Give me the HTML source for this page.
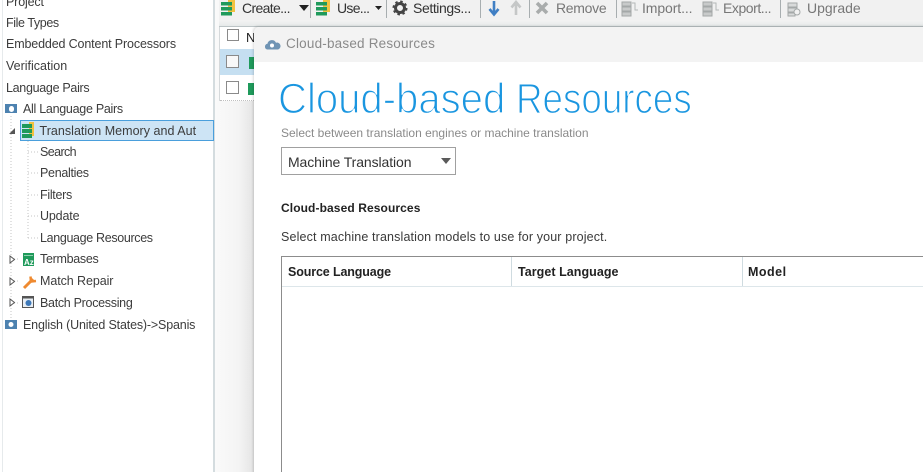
<!DOCTYPE html>
<html><head><meta charset="utf-8">
<style>
html,body{margin:0;padding:0;width:923px;height:472px;overflow:hidden;background:#fff}
body{position:relative;font-family:"Liberation Sans",sans-serif;color:#3c3c3c}
#w{position:absolute;left:0;top:0;width:923px;height:472px;overflow:hidden;filter:blur(.3px)}
.t{position:absolute;white-space:nowrap;font-size:12.5px;line-height:16px}
.b{position:absolute}
svg{position:absolute;overflow:visible}
.k{font-size:14px;top:0;color:#333}
.g{font-size:14px;top:0;color:#777}
.h{font-size:12.5px;font-weight:bold;color:#222}
.ti{top:72px;font-size:43px;line-height:54px;color:#1a96e0;-webkit-text-stroke:1.300px #fff;transform-origin:0 0}
</style></head><body><div id="w">
<!-- left tree -->
<div class="b" style="left:2px;top:0;width:1px;height:472px;background:#e6eaec"></div>
<div class="b" style="left:213px;top:0;width:2px;height:472px;background:#d4dcdf"></div>
<div class="b" style="left:215px;top:0;width:39px;height:472px;background:linear-gradient(90deg,#fafafa,#f4f4f4 60%,#e4e4e4)"></div>
<div class="t" style="left:6px;top:-6px;letter-spacing:-.15px">Project</div>
<div class="t" style="left:6px;top:15px;letter-spacing:-.4px">File Types</div>
<div class="t" style="left:6px;top:36px;letter-spacing:-.14px">Embedded Content Processors</div>
<div class="t" style="left:6px;top:58px">Verification</div>
<div class="t" style="left:6px;top:80px;letter-spacing:-.3px">Language Pairs</div>
<div class="b" style="left:5px;top:104px;width:12px;height:9px;background:#4d82b0"></div>
<div class="b" style="left:9px;top:105.500px;width:5px;height:6px;border-radius:3px;background:#fff"></div>
<div class="t" style="left:23px;top:101px;letter-spacing:-.28px">All Language Pairs</div>
<div class="b" style="left:20px;top:120px;background:#cde4f5;border:1px solid #4a9fdc;box-sizing:border-box;width:194px;height:21px"></div>
<div class="t" style="left:39.500px;top:123px;letter-spacing:.03px">Translation Memory and Aut</div>
<svg style="left:0;top:0" width="100" height="340">
<path d="M11 116V320M28 141V238M28 152H38M28 173H38M28 195H38M28 216H38M28 238H38M14 259H20M14 281H20M14 303H20" stroke="#c4c4c4" stroke-dasharray="1 2" fill="none"/>
<path d="M9 134L15 128V134Z" fill="#555"/>
<path d="M10 256L14.500 259.500L10 263Z M10 278L14.500 281.500L10 285Z M10 299L14.500 302.500L10 306Z" fill="#fff" stroke="#555"/>
<rect x="29" y="122" width="5" height="14" fill="#f2c240"/>
<rect x="22" y="124" width="10" height="4" fill="#1f9a5b"/><rect x="22" y="129" width="10" height="4" fill="#1f9a5b"/><rect x="22" y="134" width="10" height="4" fill="#1f9a5b"/>
<rect x="23" y="253" width="11" height="13" fill="#1f9a5b"/><rect x="24" y="255" width="9" height="1" fill="#8fd0ae"/>
<text x="24" y="265" font-family="Liberation Sans" font-size="8" font-weight="bold" fill="#fff">Az</text>
<path d="M24 288L33 279" stroke="#ef8a30" stroke-width="3" fill="none"/><path d="M30.500 276.500L31 281.500L36 281" stroke="#ef8a30" stroke-width="2.500" fill="none"/>
<rect x="22.500" y="296.500" width="11" height="11" fill="#e8eef4" stroke="#555"/><rect x="22" y="296" width="12" height="2.500" fill="#555"/><circle cx="28.500" cy="303" r="3" fill="#3d78b8"/>
<rect x="5" y="320" width="12" height="9" fill="#4d82b0"/><circle cx="11" cy="324.500" r="2.500" fill="#fff"/>
</svg>
<div class="t" style="left:40px;top:144px;letter-spacing:-.6px">Search</div>
<div class="t" style="left:40px;top:165px;letter-spacing:-.3px">Penalties</div>
<div class="t" style="left:40px;top:187px;letter-spacing:-.3px">Filters</div>
<div class="t" style="left:40px;top:208px;letter-spacing:-.15px">Update</div>
<div class="t" style="left:40px;top:230px;letter-spacing:-.34px">Language Resources</div>
<div class="t" style="left:40px;top:251px;letter-spacing:-.3px">Termbases</div>
<div class="t" style="left:40px;top:273px;letter-spacing:-.08px">Match Repair</div>
<div class="t" style="left:40px;top:295px;letter-spacing:-.3px">Batch Processing</div>
<div class="t" style="left:23px;top:317px;letter-spacing:-.17px">English (United States)-&gt;Spanis</div>
<!-- toolbar -->
<div class="b" style="left:219px;top:0;width:704px;height:20px;background:#f1f1f1"></div>
<div class="b" style="left:219px;top:20px;width:704px;height:7px;background:linear-gradient(#f3f3f3,#e4e8e8)"></div>
<div class="b" style="left:219px;top:26px;width:704px;height:1px;background:#bcc4c6"></div>
<svg style="left:0;top:0" width="923" height="30">
<rect x="228" y="-1" width="7" height="13" fill="#f2c240"/><rect x="221" y="2" width="11" height="3.500" fill="#1f9a5b"/><rect x="221" y="7" width="11" height="3.500" fill="#1f9a5b"/><rect x="221" y="12" width="11" height="3.500" fill="#1f9a5b"/>
<rect x="323" y="-1" width="7" height="13" fill="#f2c240"/><rect x="316" y="2" width="11" height="3.500" fill="#1f9a5b"/><rect x="316" y="7" width="11" height="3.500" fill="#1f9a5b"/><rect x="316" y="12" width="11" height="3.500" fill="#1f9a5b"/>
<path d="M299 5H309L304 11Z" fill="#222"/><path d="M375 6H382L378.500 10Z" fill="#222"/>
<path d="M310.500 0V18M386.500 0V18M480.500 0V18M529.500 0V18M616.500 0V18M780.500 0V18" stroke="#a8aeb0"/>
<circle cx="400" cy="8" r="4.500" fill="none" stroke="#444" stroke-width="3"/><circle cx="400" cy="8" r="6.500" fill="none" stroke="#444" stroke-width="2" stroke-dasharray="2.500 2.600"/>
<path d="M494 1V13M489.500 9L494 14.500L498.500 9" stroke="#3f7fc4" stroke-width="2.600" fill="none"/>
<path d="M516 15V3M511.500 7.500L516 2L520.500 7.500" stroke="#c5c7c7" stroke-width="2.600" fill="none"/>
<path d="M537 3L547 13M547 3L537 13" stroke="#a9acac" stroke-width="3.600"/>
<path d="M622 2h9v4h-9zM622 7h9v4h-9zM622 12h9v4h-9z" fill="#c8caca" stroke="#a4a8a8"/><path d="M632 3h3v7h3" fill="none" stroke="#b4b8b8"/>
<path d="M703 2h9v4h-9zM703 7h9v4h-9zM703 12h9v4h-9z" fill="#c8caca" stroke="#a4a8a8"/><path d="M713 3h3v7h3" fill="none" stroke="#b4b8b8"/>
<path d="M788 3h9v4h-9zM788 8h9v4h-9zM788 13h7v3h-7z" fill="#d8dada" stroke="#a4a8a8"/><circle cx="797" cy="12" r="3" fill="#f1f1f1" stroke="#a4a8a8"/>
</svg>
<div class="t k" style="left:242px;letter-spacing:-.65px">Create...</div>
<div class="t k" style="left:337px;letter-spacing:-.7px">Use...</div>
<div class="t k" style="left:413px;letter-spacing:-.4px">Settings...</div>
<div class="t g" style="left:556px;letter-spacing:-.3px">Remove</div>
<div class="t g" style="left:642px;letter-spacing:-.1px">Import...</div>
<div class="t g" style="left:723px;letter-spacing:-.45px">Export...</div>
<div class="t g" style="left:807px">Upgrade</div>
<!-- list behind -->
<div class="b" style="left:219px;top:27px;width:40px;height:74px;background:#fff;border-left:1px solid #d5d9db;box-sizing:border-box"></div>
<div class="b" style="left:220px;top:49px;width:40px;height:26px;background:#c5dff1"></div>
<div class="b" style="left:220px;top:75px;width:40px;height:26px;border-bottom:1px dotted #c0c0c0;box-sizing:border-box"></div>
<div class="b" style="left:227px;top:29px;width:10px;height:10px;border:1px solid #8a8a8a;background:#fff"></div>
<div class="b" style="left:226px;top:55px;width:11px;height:11px;border:1px solid #8a8a8a;background:#f8f8f8"></div>
<div class="b" style="left:226px;top:81px;width:11px;height:11px;border:1px solid #8a8a8a;background:#fff"></div>
<div class="t" style="left:246px;top:30px;color:#222;font-size:13px">N</div>
<div class="b" style="left:249px;top:57px;width:6px;height:12px;background:#1f9a5b"></div>
<div class="b" style="left:248px;top:83px;width:7px;height:12px;background:#1f9a5b"></div>
<!-- dialog -->
<div class="b" style="left:254px;top:27px;width:680px;height:460px;background:#fff;border-top-left-radius:5px;box-shadow:-1px -1px 2px rgba(0,0,0,.14)"></div>
<div class="b" style="left:254px;top:27px;width:669px;height:35px;background:#f3f3f3;border-top-left-radius:5px"></div>
<svg style="left:0;top:0" width="300" height="60">
<path d="M267 49.500a3 3 0 0 1 .5-5.800a4.500 4.500 0 0 1 8.500-1a3.500 3.500 0 0 1 2 6.800z" fill="#6f94b4"/><circle cx="272" cy="45.500" r="2" fill="#fff"/>
</svg>
<div class="t" style="left:286px;top:36px;font-size:13.500px;color:#8a8a8a;letter-spacing:.2px">Cloud-based Resources</div>
<div class="t ti" style="left:278px;transform:scaleX(.932)">Cloud-based</div>
<div class="t ti" style="left:516px;transform:scaleX(.855)">Resources</div>
<div class="t" style="left:281px;top:125px;font-size:12px;color:#8a8a8a;letter-spacing:0">Select between translation engines or machine translation</div>
<div class="b" style="left:281px;top:147px;width:175px;height:28px;border:1px solid #a0a0a0;box-sizing:border-box"></div>
<div class="t" style="left:288px;top:154px;font-size:14px;color:#333;letter-spacing:-.1px">Machine Translation</div>
<svg style="left:0;top:0" width="460" height="180"><path d="M441 158H451L446 164Z" fill="#5a5a5a"/></svg>
<div class="t h" style="left:281px;top:200px;font-size:12px;letter-spacing:.1px">Cloud-based Resources</div>
<div class="t" style="left:281px;top:229px;font-size:12.500px;color:#3a3a3a;letter-spacing:.14px">Select machine translation models to use for your project.</div>
<!-- table -->
<div class="b" style="left:281px;top:256px;width:642px;height:1px;background:#8c8c8c"></div>
<div class="b" style="left:281px;top:256px;width:1px;height:216px;background:#8c8c8c"></div>
<div class="b" style="left:282px;top:286px;width:641px;height:1px;background:#dde6ea"></div>
<div class="b" style="left:511px;top:257px;width:1px;height:29px;background:#cfdbe0"></div>
<div class="b" style="left:742px;top:257px;width:1px;height:29px;background:#cfdbe0"></div>
<div class="t h" style="left:288px;top:264px;letter-spacing:-.13px">Source Language</div>
<div class="t h" style="left:518px;top:264px;letter-spacing:.05px">Target Language</div>
<div class="t h" style="left:748px;top:264px;letter-spacing:.5px">Model</div>
</div></body></html>
